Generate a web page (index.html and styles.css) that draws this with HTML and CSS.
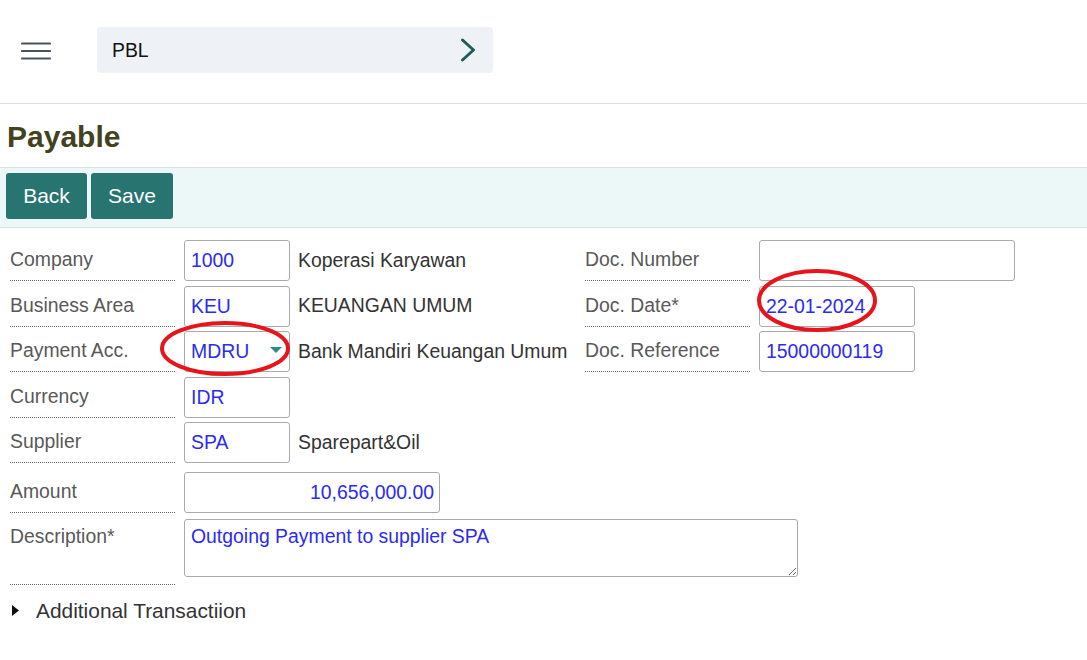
FILE: index.html
```html
<!DOCTYPE html>
<html lang="id">
<head>
<meta charset="utf-8">
<title>Payable</title>
<link rel="stylesheet" href="styles.css">
</head>
<body>
<div class="page">
  <header class="topbar">
    <div class="menu">
      <svg width="30" height="20" viewBox="0 0 30 20"><g stroke="#4a5163" stroke-width="2.2" stroke-linecap="round"><line x1="1" y1="2.5" x2="29" y2="2.5"/><line x1="1" y1="10" x2="29" y2="10"/><line x1="1" y1="17.5" x2="29" y2="17.5"/></g></svg>
    </div>
    <div class="crumb">
      <span class="crumb-text">PBL</span>
      <svg class="chev" width="16" height="24" viewBox="0 0 16 24"><polyline points="2.5,2 13.5,12 2.5,22" fill="none" stroke="#1f5a56" stroke-width="3" stroke-linecap="round" stroke-linejoin="round"/></svg>
    </div>
  </header>

  <h1 class="title">Payable</h1>

  <div class="toolbar">
    <button class="btn" type="button">Back</button>
    <button class="btn" type="button">Save</button>
  </div>

  <form class="form">
    <div class="row">
      <div class="col-left">
        <div class="label">Company</div>
        <input class="field w-s" value="1000" readonly>
        <span class="desc">Koperasi Karyawan</span>
      </div>
      <div class="col-right">
        <div class="label">Doc. Number</div>
        <input class="field w-l" value="" readonly>
      </div>
    </div>
    <div class="row">
      <div class="col-left">
        <div class="label">Business Area</div>
        <input class="field w-s" value="KEU" readonly>
        <span class="desc">KEUANGAN UMUM</span>
      </div>
      <div class="col-right">
        <div class="label">Doc. Date*</div>
        <input class="field w-m" value="22-01-2024" readonly>
      </div>
    </div>
    <div class="row">
      <div class="col-left">
        <div class="label">Payment Acc.</div>
        <div class="field w-s select"><span>MDRU</span><span class="caret"></span></div>
        <span class="desc">Bank Mandiri Keuangan Umum</span>
      </div>
      <div class="col-right">
        <div class="label">Doc. Reference</div>
        <input class="field w-m" value="15000000119" readonly>
      </div>
    </div>
    <div class="row">
      <div class="col-left">
        <div class="label">Currency</div>
        <input class="field w-s" value="IDR" readonly>
      </div>
    </div>
    <div class="row">
      <div class="col-left">
        <div class="label">Supplier</div>
        <input class="field w-s" value="SPA" readonly>
        <span class="desc">Sparepart&amp;Oil</span>
      </div>
    </div>
    <div class="row row-amount">
      <div class="col-left">
        <div class="label">Amount</div>
        <input class="field w-l num" value="10,656,000.00" readonly>
      </div>
    </div>
    <div class="row row-desc">
      <div class="col-wide">
        <div class="label">Description*</div>
        <textarea class="field area" readonly>Outgoing Payment to supplier SPA</textarea>
      </div>
    </div>
  </form>

  <div class="more">
    <svg width="7" height="11" viewBox="0 0 7 11"><polygon points="0,0 7,5.5 0,11" fill="#111"/></svg>
    <span>Additional Transactiion</span>
  </div>

  <svg class="marks" width="1087" height="660" viewBox="0 0 1087 660">
    <ellipse cx="225" cy="348.5" rx="63" ry="25.5" fill="none" stroke="#e8141c" stroke-width="4"/>
    <ellipse cx="817" cy="300.5" rx="58" ry="29.5" fill="none" stroke="#e8141c" stroke-width="4"/>
  </svg>
</div>
</body>
</html>
```
FILE: styles.css
```css
body {
  margin: 0;
  background: #fff;
  font-family: "Liberation Sans", Arial, sans-serif;
}

.page {
  position: relative;
  width: 1087px;
  min-height: 660px;
}

.topbar {
  height: 103px;
  border-bottom: 1px solid #dcdcdc;
  display: flex;
  align-items: flex-start;
}

.menu {
  margin-left: 21px;
  margin-top: 41px;
  width: 30px;
  height: 20px;
}

.menu svg { display: block; }

.crumb {
  margin-left: 46px;
  margin-top: 27px;
  width: 396px;
  height: 46px;
  box-sizing: border-box;
  background: #eef2f7;
  border-radius: 4px;
  display: flex;
  align-items: center;
  justify-content: space-between;
  padding: 0 17px 0 15px;
}

.crumb-text {
  font-size: 19.4px;
  color: #111;
}

.chev { display: block; }

.title {
  margin: 0;
  height: 63px;
  line-height: 65px;
  font-size: 30px;
  font-weight: bold;
  color: #42421f;
  padding-left: 7px;
}

.toolbar {
  display: flex;
  gap: 4px;
  padding: 5px 6px 8px;
  background: #ecf8f8;
  border-top: 1px solid #d8e2e2;
  border-bottom: 1px solid #d8e2e2;
}

.btn {
  height: 46px;
  width: 81px;
  padding: 0;
  border: none;
  border-radius: 3px;
  background: #287471;
  color: #fff;
  font-family: "Liberation Sans", Arial, sans-serif;
  font-size: 21px;
  text-align: center;
}

.btn + .btn { width: 82px; }

.form {
  padding-top: 7.5px;
}

.row {
  display: flex;
}

.col-left {
  display: flex;
  width: 575px;
  margin-left: 10px;
}

.col-right {
  display: flex;
}

.col-wide {
  display: flex;
  margin-left: 10px;
}

.label {
  flex: none;
  width: 165px;
  box-sizing: border-box;
  border-bottom: 1px dotted #666;
  padding-top: 3.5px;
  line-height: 40px;
  font-size: 19.4px;
  color: #595959;
  white-space: nowrap;
}

.field {
  flex: none;
  box-sizing: border-box;
  margin: 4.5px 0 0 9px;
  height: 41px;
  border: 1px solid #aaa;
  border-radius: 3px;
  padding: 0 6px;
  font-family: "Liberation Sans", Arial, sans-serif;
  font-size: 19.4px;
  color: #2b2bf2;
  background: #fff;
  outline: none;
}

.w-s { width: 106px; }
.w-m { width: 156px; }
.w-l { width: 256px; }

.num {
  text-align: right;
  padding-right: 5px;
}

.select {
  display: flex;
  align-items: center;
  justify-content: space-between;
  padding-right: 7px;
}

.caret {
  width: 0;
  height: 0;
  border-left: 6px solid transparent;
  border-right: 6px solid transparent;
  border-top: 6px solid #2e8a86;
  margin-top: -4px;
}

.desc {
  margin: 4px 0 0 8px;
  line-height: 41px;
  font-size: 19.4px;
  color: #333;
  white-space: nowrap;
}

.row-amount .label { padding-top: 7.5px; }
.row-amount .field { margin-top: 8.5px; }

.row-desc .label {
  height: 72px;
  padding-top: 3px;
}

.area {
  width: 614px;
  height: 58px;
  margin-top: 6px;
  padding: 5px 6px;
  line-height: 22px;
  resize: both;
}

.more {
  display: flex;
  align-items: center;
  gap: 17px;
  margin-top: 14px;
  padding-left: 12px;
  height: 24px;
  font-size: 20.9px;
  color: #333;
}

.more svg { display: block; }

.marks {
  position: absolute;
  top: 0;
  left: 0;
  pointer-events: none;
}
```
